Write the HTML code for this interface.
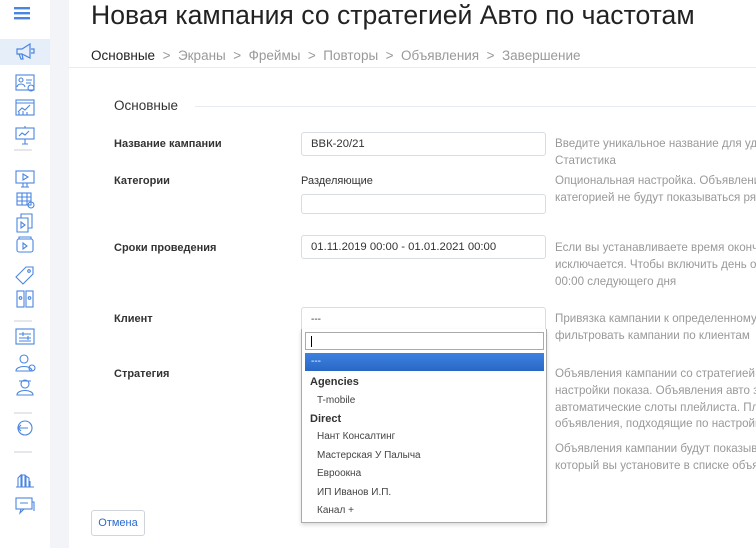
<!DOCTYPE html>
<html><head><meta charset="utf-8"><style>
*{box-sizing:border-box;margin:0;padding:0}
body{width:756px;height:548px;overflow:hidden;background:#fff;font-family:"Liberation Sans","DejaVu Sans",sans-serif;position:relative;color:#333}
#clip{position:absolute;left:0;top:0;width:756px;height:548px;overflow:hidden}
.a{position:absolute;white-space:nowrap}
#side{position:absolute;left:0;top:0;width:50px;height:548px;background:#fff}
#strip{position:absolute;left:50px;top:0;width:19px;height:548px;background:#f3f4f8}
.ic{position:absolute;left:14px;width:22px;height:20px}
.sep{position:absolute;left:14px;width:18px;height:2px;background:#e6e7ea}
.lbl{font-size:11px;font-weight:bold;color:#333;left:114px}
.help{font-size:11.6px;color:#999;left:555px;line-height:16.8px}
.inp{position:absolute;left:301px;width:245px;border:1px solid #d9dce0;border-radius:3px;background:#fff;font-size:11.3px;color:#333;padding-left:9px}
.dd{font-size:10px;color:#444}
</style></head><body><div id="clip">
<div id="side">
<svg class="a" style="left:14px;top:6px" width="16" height="14"><rect x="0" y="1" width="16" height="2.4" fill="#4a86e0"/><rect x="0" y="6" width="16" height="2.4" fill="#4a86e0"/><rect x="0" y="11" width="16" height="2.4" fill="#4a86e0"/></svg>
<div class="a" style="left:0;top:39px;width:50px;height:26px;background:#e6eefa"></div>
<svg class="ic" style="top:42px" viewBox="0 0 22 20" fill="none" stroke="#4a86e0" stroke-width="1.2"><path d="M3 7h5l8-5v14l-8-4H3z M5 12l2 5h2l-1-5 M17 7h3v4h-3"/></svg>
<svg class="ic" style="top:73px" viewBox="0 0 22 20" fill="none" stroke="#4a86e0" stroke-width="1.1"><rect x="2" y="2" width="18" height="15"/><circle cx="7" cy="7" r="2"/><path d="M3 14c1-4 7-4 8 0 M12 7h6 M12 10h5"/><circle cx="17" cy="15" r="3"/></svg>
<svg class="ic" style="top:98px" viewBox="0 0 22 20" fill="none" stroke="#4a86e0" stroke-width="1.1"><rect x="2" y="2" width="18" height="15"/><path d="M2 5h18 M4 14l4-4 3 2 5-5 M5 17v-3 M9 17v-4 M13 17v-3"/></svg>
<svg class="ic" style="top:125px" viewBox="0 0 22 20" fill="none" stroke="#4a86e0" stroke-width="1.1"><rect x="2" y="3" width="18" height="11"/><path d="M5 11l3-3 3 2 4-4 M11 14v5 M8 19h6 M11 1v2"/></svg>
<div class="sep" style="top:149px"></div>
<svg class="ic" style="top:169px" viewBox="0 0 22 20" fill="none" stroke="#4a86e0" stroke-width="1.1"><rect x="2" y="2" width="18" height="12"/><path d="M9 5v6l5-3z M9 14v4 M13 14v4 M7 18h8"/></svg>
<svg class="ic" style="top:190px" viewBox="0 0 22 20" fill="none" stroke="#4a86e0" stroke-width="1.1"><rect x="3" y="3" width="14" height="12"/><path d="M3 7h14 M3 11h14 M8 3v12 M13 3v12"/><circle cx="17" cy="15" r="3"/></svg>
<svg class="ic" style="top:213px" viewBox="0 0 22 20" fill="none" stroke="#4a86e0" stroke-width="1.1"><path d="M3 5h11v14H3z M7 5V1h11v14h-4 M7 9v6l4-3z"/></svg>
<svg class="ic" style="top:235px" viewBox="0 0 22 20" fill="none" stroke="#4a86e0" stroke-width="1.1"><rect x="3" y="4" width="16" height="13" rx="2"/><path d="M9 8v6l4-3z M5 4V2h12v2"/></svg>
<svg class="ic" style="top:265px" viewBox="0 0 22 20" fill="none" stroke="#4a86e0" stroke-width="1.1"><path d="M2 12l10-10h7v7L9 19z"/><circle cx="15" cy="6" r="1.3"/></svg>
<svg class="ic" style="top:289px" viewBox="0 0 22 20" fill="none" stroke="#4a86e0" stroke-width="1.1"><rect x="3" y="2" width="7" height="16"/><rect x="12" y="2" width="7" height="16"/><circle cx="6.5" cy="9" r="1.3"/><circle cx="15.5" cy="9" r="1.3"/></svg>
<div class="sep" style="top:320px"></div>
<svg class="ic" style="top:327px" viewBox="0 0 22 20" fill="none" stroke="#4a86e0" stroke-width="1.1"><rect x="2" y="2" width="18" height="15"/><path d="M5 7h12 M5 11h12 M5 14h12 M9 5v4 M14 9v4"/></svg>
<svg class="ic" style="top:353px" viewBox="0 0 22 20" fill="none" stroke="#4a86e0" stroke-width="1.1"><circle cx="10" cy="6" r="4"/><path d="M2 18c0-6 16-6 16 0z"/><circle cx="18" cy="15" r="3"/></svg>
<svg class="ic" style="top:377px" viewBox="0 0 22 20" fill="none" stroke="#4a86e0" stroke-width="1.1"><circle cx="11" cy="7" r="4"/><path d="M5 4h12 M3 18c0-6 16-6 16 0z"/></svg>
<div class="sep" style="top:412px"></div>
<svg class="ic" style="top:418px" viewBox="0 0 22 20" fill="none" stroke="#4a86e0" stroke-width="1.1"><circle cx="11" cy="10" r="7"/><path d="M4 10h10 M7 7l-3 3 3 3"/></svg>
<div class="sep" style="top:451px"></div>
<svg class="ic" style="top:470px" viewBox="0 0 22 20" fill="none" stroke="#4a86e0" stroke-width="1.1"><path d="M2 17h18 M4 17V8l3-3v12 M8 17V5h3v12 M12 17V6l3 2v9 M16 17v-6"/></svg>
<svg class="ic" style="top:495px" viewBox="0 0 22 20" fill="none" stroke="#4a86e0" stroke-width="1.1"><rect x="2" y="3" width="16" height="11"/><path d="M6 8h8 M7 14l-1 4 4-4 M18 7h2v9"/></svg>
</div>
<div id="strip"></div>
<div class="a" style="left:69px;top:67px;width:687px;height:1px;background:#e8ebef"></div>
<div class="a" style="left:91px;top:0px;font-size:26.6px;color:#222;line-height:31px">Новая кампания со стратегией Авто по частотам</div>
<div class="a" style="left:91px;top:48px;font-size:13.5px;color:#999"><span style="color:#222">Основные</span> &nbsp;&gt;&nbsp; Экраны &nbsp;&gt;&nbsp; Фреймы &nbsp;&gt;&nbsp; Повторы &nbsp;&gt;&nbsp; Объявления &nbsp;&gt;&nbsp; Завершение</div>
<div class="a" style="left:114px;top:98px;font-size:13.5px;color:#333">Основные</div>
<div class="a" style="left:195px;top:106px;width:561px;height:1px;background:#e8ebef"></div>

<div class="a lbl" style="top:138px">Название кампании</div>
<div class="a lbl" style="top:175px">Категории</div>
<div class="a lbl" style="top:242px">Сроки проведения</div>
<div class="a lbl" style="top:313px">Клиент</div>
<div class="a lbl" style="top:368px">Стратегия</div>

<div class="inp" style="top:132px;height:24px;line-height:23px">ВВК-20/21</div>
<div class="a" style="left:301px;top:175px;font-size:11px;color:#333">Разделяющие</div>
<div class="inp" style="top:194px;height:20px"></div>
<div class="inp" style="top:235px;height:24px;line-height:23px">01.11.2019 00:00 - 01.01.2021 00:00</div>
<div class="inp" style="top:307px;height:23px;line-height:24px;border-radius:3px 3px 0 0;font-size:10px">---</div>
<div class="a" style="left:301px;top:329px;width:246px;height:194px;border:1px solid #aaa;border-top:none;background:#fff;box-shadow:0 2px 4px rgba(0,0,0,.15)">
 <div class="a" style="left:3px;top:3px;width:239px;height:18px;border:1px solid #aaa"><div class="a" style="left:5px;top:3px;width:1px;height:11px;background:#000"></div></div>
 <div class="a" style="left:3px;top:24px;width:239px;height:18px;background:linear-gradient(#3d82e0,#2a67c5);color:#fff;font-size:10px;padding-left:6px;line-height:17px">---</div>
 <div class="a" style="left:8px;top:47px;font-size:11px;font-weight:bold;color:#333">Agencies</div>
 <div class="a dd" style="left:15px;top:66px">T-mobile</div>
 <div class="a" style="left:8px;top:84px;font-size:11px;font-weight:bold;color:#333">Direct</div>
 <div class="a dd" style="left:15px;top:102px">Нант Консалтинг</div>
 <div class="a dd" style="left:15px;top:121px">Мастерская У Палыча</div>
 <div class="a dd" style="left:15px;top:139px">Евроокна</div>
 <div class="a dd" style="left:15px;top:158px">ИП Иванов И.П.</div>
 <div class="a dd" style="left:15px;top:176px">Канал +</div>
</div>

<div class="a help" style="top:136px">Введите уникальное название для удобства поиска<br>Статистика</div>
<div class="a help" style="top:173px">Опциональная настройка. Объявления с этой<br>категорией не будут показываться рядом</div>
<div class="a help" style="top:240px">Если вы устанавливаете время окончания, этот день<br>исключается. Чтобы включить день окончания, укажите<br>00:00 следующего дня</div>
<div class="a help" style="top:311px">Привязка кампании к определенному клиенту позволит<br>фильтровать кампании по клиентам</div>
<div class="a help" style="top:366px">Объявления кампании со стратегией Авто используют<br>настройки показа. Объявления авто занимают<br>автоматические слоты плейлиста. Плеер показывает<br>объявления, подходящие по настройкам</div>
<div class="a help" style="top:441px">Объявления кампании будут показываться в порядке,<br>который вы установите в списке объявлений</div>

<div class="a" style="left:91px;top:510px;width:54px;height:26px;border:1px solid #d0d5db;border-radius:3px;font-size:11px;color:#2a6ad0;text-align:center;line-height:25px">Отмена</div>
</div></body></html>
